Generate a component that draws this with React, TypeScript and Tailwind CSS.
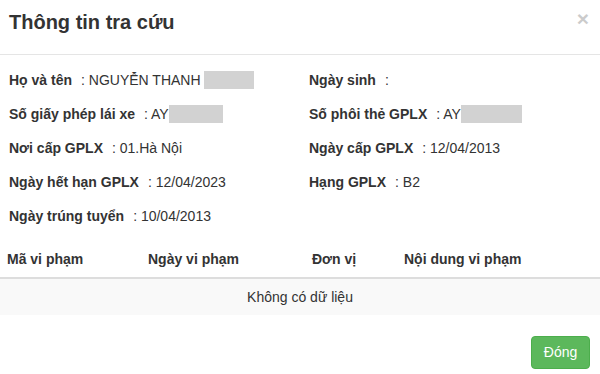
const font = { fontFamily: '"Liberation Sans", Arial, sans-serif' };

type Field = {
  label: string;
  value?: string;
  blank?: number;
};

const rows: [Field, Field | null][] = [
  [
    { label: "Họ và tên", value: "NGUYỄN THANH ", blank: 50 },
    { label: "Ngày sinh", value: "" },
  ],
  [
    { label: "Số giấy phép lái xe", value: "AY", blank: 54 },
    { label: "Số phôi thẻ GPLX", value: "AY", blank: 61 },
  ],
  [
    { label: "Nơi cấp GPLX", value: "01.Hà Nội" },
    { label: "Ngày cấp GPLX", value: "12/04/2013" },
  ],
  [
    { label: "Ngày hết hạn GPLX", value: "12/04/2023" },
    { label: "Hạng GPLX", value: "B2" },
  ],
  [{ label: "Ngày trúng tuyển", value: "10/04/2013" }, null],
];

function InfoItem({ field }: { field: Field | null }) {
  if (!field) {
    return <div />;
  }
  return (
    <div className="flex h-[34px] items-center whitespace-pre text-[14px] leading-[20px] text-[#333]">
      <span className="mr-[9px] font-bold">{field.label}</span>
      <span>: {field.value}</span>
      {field.blank ? (
        <span className="inline-block h-[18px] bg-[#d2d2d2]" style={{ width: field.blank }} />
      ) : null}
    </div>
  );
}

export default function App() {
  return (
    <div className="h-[374px] w-[600px] overflow-hidden bg-white text-[#333]" style={font}>
      <div className="relative h-[55px] border-b border-[#e5e5e5] px-[9px] pt-[11px]">
        <h4 className="text-[20px] font-bold leading-[23px] text-[#333]">Thông tin tra cứu</h4>
        <button
          type="button"
          className="absolute right-[11px] top-[6px] text-[21px] font-bold leading-[26px] text-black opacity-20"
        >
          ×
        </button>
      </div>

      <div className="pt-[8px]">
        {rows.map(([left, right], i) => (
          <div key={i} className="grid grid-cols-2">
            <div className="pl-[9px]">
              <InfoItem field={left} />
            </div>
            <div className="pl-[9px]">
              <InfoItem field={right} />
            </div>
          </div>
        ))}
      </div>

      <table className="mt-[8px] w-full border-collapse text-[14px] leading-[20px]">
        <thead>
          <tr className="border-b-2 border-[#ddd] text-left">
            <th className="w-[141px] px-[7px] py-[8px] font-bold">Mã vi phạm</th>
            <th className="w-[164px] px-[7px] py-[8px] font-bold">Ngày vi phạm</th>
            <th className="w-[92px] px-[7px] py-[8px] font-bold">Đơn vị</th>
            <th className="px-[7px] py-[8px] font-bold">Nội dung vi phạm</th>
          </tr>
        </thead>
        <tbody>
          <tr className="bg-[#f9f9f9]">
            <td colSpan={4} className="px-[7px] py-[8px] text-center">
              Không có dữ liệu
            </td>
          </tr>
        </tbody>
      </table>

      <div className="flex justify-end pr-[10px] pt-[21px]">
        <button
          type="button"
          className="h-[33px] w-[59px] rounded-[4px] border border-[#4cae4c] bg-[#5cb85c] text-[14px] text-white"
        >
          Đóng
        </button>
      </div>
    </div>
  );
}
